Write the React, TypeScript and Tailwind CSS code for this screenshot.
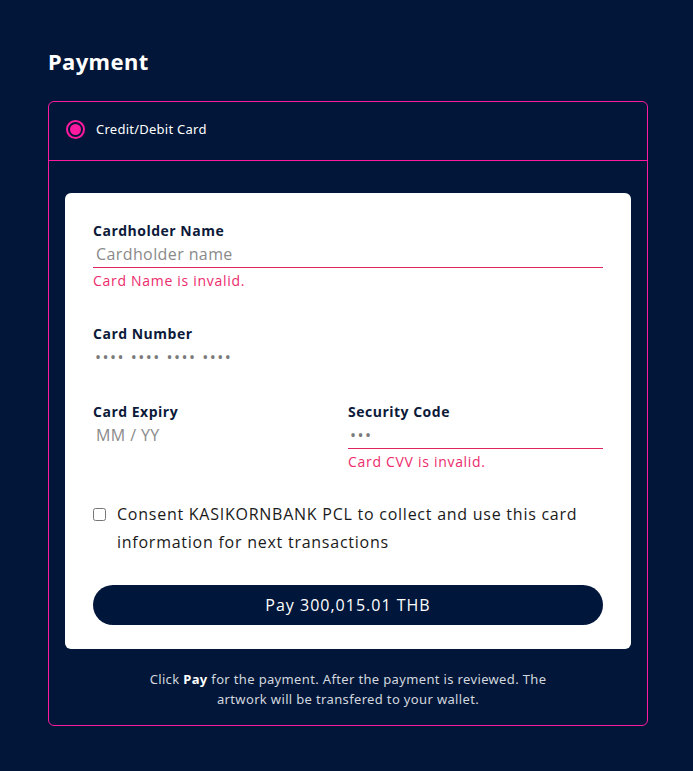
import React, { useState } from 'react';

const outerFont = { fontFamily: '"Noto Sans", "Open Sans", sans-serif' };
const cardFont = { fontFamily: '"Open Sans", "Noto Sans", sans-serif' };

function Label({ children }: { children: React.ReactNode }) {
  return <div className="text-[14px] font-bold text-[#0c1a3a] leading-[18px] tracking-[0.5px]">{children}</div>;
}

function ErrorText({ children }: { children: React.ReactNode }) {
  return <div className="text-[14px] leading-[24px] text-[#ec2b6c] mt-[1px] tracking-[0.7px]">{children}</div>;
}

export default function App() {
  const [consent, setConsent] = useState(false);

  return (
    <div className="min-h-[771px] w-full bg-[#011638] pl-12 pt-[45px] pb-[45px]" style={outerFont}>
      <h1 className="text-[22px] font-bold text-white leading-[32px] mb-[24px] tracking-[0.4px]">Payment</h1>

      <div className="w-[600px] rounded-[6px] border border-[#ff1aa0]">
        {/* method row */}
        <div className="flex items-center h-[59px] pb-[3px] pl-[17px] border-b border-[#ff1aa0]">
          <span className="w-[19px] h-[19px] rounded-full border-2 border-[#ff1aa0] flex items-center justify-center">
            <span className="w-[11px] h-[11px] rounded-full bg-[#ff1aa0]" />
          </span>
          <span className="ml-[11px] text-[13px] text-white tracking-[0.25px]">Credit/Debit Card</span>
        </div>

        <div className="px-4 pt-8 pb-4">
          <div className="bg-white rounded-[6px] px-7 pt-[29px] pb-6" style={cardFont}>
            {/* cardholder */}
            <div>
              <Label>Cardholder Name</Label>
              <div className="flex items-center h-[28px] border-b border-[#e0245e] pl-[3px] text-[16px] text-[#8a8a8a] tracking-[0.4px]">
                Cardholder name
              </div>
              <ErrorText>Card Name is invalid.</ErrorText>
            </div>

            {/* card number */}
            <div className="mt-[32px]">
              <Label>Card Number</Label>
              <div className="flex items-center h-[28px] border-b border-white pl-[2px] text-[16px] tracking-[1.5px] text-[#7a7a7a]">
                •••• •••• •••• ••••
              </div>
            </div>

            {/* expiry / cvv */}
            <div className="grid grid-cols-[255px_1fr] mt-[32px]">
              <div>
                <Label>Card Expiry</Label>
                <div className="flex items-center h-[28px] pl-[3px] text-[16px] text-[#8a8a8a] tracking-[0.4px]">MM / YY</div>
              </div>
              <div>
                <Label>Security Code</Label>
                <div className="flex items-center h-[28px] border-b border-[#e0245e] pl-[2px] text-[16px] tracking-[1.5px] text-[#7a7a7a]">
                  •••
                </div>
                <ErrorText>Card CVV is invalid.</ErrorText>
              </div>
            </div>

            {/* consent */}
            <label className="flex items-start mt-[26px] cursor-pointer">
              <input
                type="checkbox"
                checked={consent}
                onChange={(e) => setConsent(e.target.checked)}
                className="mt-[8px] w-[13px] h-[13px] shrink-0"
              />
              <span className="ml-[11px] text-[16px] leading-[28px] text-[#1a1a1a] tracking-[0.75px]">
                Consent KASIKORNBANK PCL to collect and use this card information for next transactions
              </span>
            </label>

            <button className="mt-[29px] w-full h-[40px] rounded-full bg-[#00163b] text-white text-[16px] tracking-[1px]">
              Pay 300,015.01 THB
            </button>
          </div>

          <p className="mt-[20px] text-center text-[13px] leading-[20px] text-[#d3d7df] px-[76px] tracking-[0.35px]">
            Click <span className="font-bold text-white">Pay</span> for the payment. After the payment is reviewed. The artwork will be transfered to your wallet.
          </p>
        </div>
      </div>
    </div>
  );
}
